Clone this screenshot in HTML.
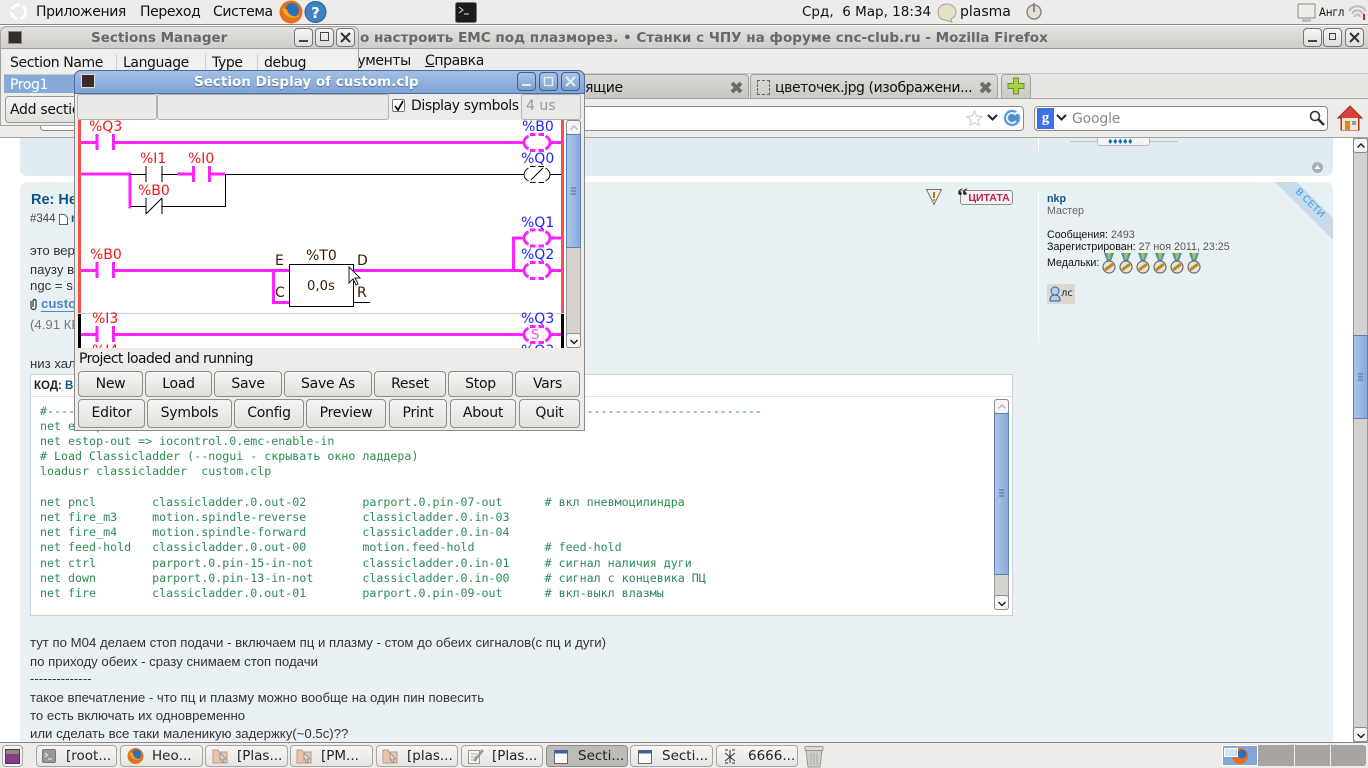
<!DOCTYPE html>
<html lang="ru"><head><meta charset="utf-8"><title>Screen</title>
<style>
html,body{margin:0;padding:0;width:1368px;height:768px;overflow:hidden;background:#fff}
body{position:relative;font-family:"DejaVu Sans","Noto Sans CJK SC",sans-serif;font-size:13px;color:#111}
.a{position:absolute;white-space:nowrap;box-sizing:border-box}
.t{position:absolute;white-space:nowrap;line-height:16px}
.f{font-family:"Liberation Sans","DejaVu Sans",sans-serif;font-size:13.2px;color:#333}
.s{font-size:10.7px}
.code{position:absolute;left:40px;font:11.65px/15px "DejaVu Sans Mono",monospace;color:#2e8b57;white-space:pre}
.btn{position:absolute;box-sizing:border-box;background:linear-gradient(#f6f5f4,#e2e0dd);border:1px solid #8f8d8a;border-radius:4px;text-align:center;font-size:14px;letter-spacing:-.25px;color:#111;height:26px;line-height:24px;white-space:nowrap}
.r2{top:399px;height:29px;line-height:26px}
.wb{position:absolute;box-sizing:border-box;width:19px;height:19px;border-radius:4px;border:1px solid #77767a;background:linear-gradient(#f7f7f6,#dedddb)}
.wbb{border-color:#3f5f8f;background:linear-gradient(#a8c3e6,#7d9fd0)}
.task{position:absolute;top:745px;height:22px;box-sizing:border-box;background:linear-gradient(#f7f6f5,#e6e4e2);border:1px solid #a8a6a3;border-radius:4px;font-size:13.5px;line-height:20px;white-space:nowrap;color:#222}
.sb{position:absolute;box-sizing:border-box;background:linear-gradient(90deg,#a9c5ea,#88aad9);border:1px solid #5f7fb0}
.arrow{position:absolute;box-sizing:border-box;background:#f6f6f5;border:1px solid #8d8d8d;border-radius:3px;width:15px;height:15px}
svg{position:absolute;overflow:visible}
</style></head><body>

<!-- Top panel -->
<div class="a" style="left:0;top:0;width:1368px;height:25px;background:#edecea;border-bottom:1px solid #8a8886"></div>
<svg style="left:8px;top:2px" width="20" height="20"><circle cx="10.500" cy="10" r="7" fill="none" stroke="#fff" stroke-width="2.600" stroke-dasharray="9 3.500"/></svg>
<div class="t" style="left:36px;top:4px;font-size:14px;letter-spacing:-.4px">Приложения</div>
<div class="t" style="left:140px;top:4px;font-size:14px;letter-spacing:-.4px">Переход</div>
<div class="t" style="left:213px;top:4px;font-size:14px;letter-spacing:-.4px">Система</div>
<svg style="left:279px;top:0" width="24" height="24"><circle cx="12" cy="12" r="11.500" fill="#e8701a"/><circle cx="13" cy="10" r="7" fill="#2f6fb5"/><path d="M3 8C5 18 15 21 21 15 16 18 9 16 8 9z" fill="#f6a51c"/></svg>
<svg style="left:304px;top:0" width="23" height="23"><circle cx="11.500" cy="12" r="10.500" fill="#3f83c4" stroke="#255d96"/><text x="11.500" y="18" text-anchor="middle" font-size="15" font-weight="bold" fill="#fff" font-family="DejaVu Sans">?</text></svg>
<svg style="left:455px;top:2px" width="22" height="21"><rect x=".5" y=".5" width="21" height="20" rx="2" fill="#1b1b1b" stroke="#777"/><path d="M4 5l4 3-4 3M9 12h5" stroke="#ddd" fill="none"/></svg>
<div class="t" style="left:802px;top:4px;font-size:13.500px">Срд,&nbsp; 6 Мар, 18:34</div>
<svg style="left:937px;top:3px" width="20" height="20"><path d="M10 1C4 1 1 5 1 9.500S4 17 8 17L15 19 14 16C17 14.500 19 12.500 19 9.500 19 5 15 1 10 1z" fill="#e5dfc6" stroke="#a9a38c"/></svg>
<div class="t" style="left:960px;top:4px;font-size:14px">plasma</div>
<svg style="left:1025px;top:1px" width="18" height="20"><circle cx="9" cy="11" r="7" fill="#e2e0d4" stroke="#8d8b80" stroke-width="1.500"/><path d="M9 2v9" stroke="#8d8b80" stroke-width="2"/></svg>
<svg style="left:1297px;top:3px" width="20" height="20"><rect x="1" y="1" width="17" height="14" rx="1" fill="#eeece6" stroke="#8a8a82"/><rect x="5" y="16" width="9" height="3" fill="#bbb"/></svg>
<div class="t" style="left:1319px;top:4px;font-size:11.500px;transform:scaleX(.88);transform-origin:left">Англ</div>
<svg style="left:1347px;top:3px" width="21" height="20"><path d="M2 8a10 10 0 0 1 17 0M5 11a6 6 0 0 1 11 0M8 14a2.500 2.500 0 0 1 5 0" stroke="#bbb" fill="none" stroke-width="2"/><path d="M17 11v6" stroke="#d22" stroke-width="2"/></svg>

<!-- Firefox window -->
<div class="a" style="left:0;top:26px;width:1368px;height:23px;background:linear-gradient(#e3e2df,#cfcecb);border-bottom:1px solid #999"></div>
<div class="t" style="left:360px;top:30px;font-weight:bold;font-size:13.550px;color:#67686b">о настроить EMC под плазморез. • Станки с ЧПУ на форуме cnc-club.ru - Mozilla Firefox</div>
<div class="wb" style="left:1303px;top:28px"><svg style="left:4px;top:11px" width="9" height="3"><rect width="9" height="2" fill="#444"/></svg></div>
<div class="wb" style="left:1323px;top:28px"><svg style="left:5px;top:4px" width="8" height="8"><rect x=".5" y=".5" width="6" height="6" fill="none" stroke="#444"/></svg></div>
<div class="wb" style="left:1345px;top:28px"><svg style="left:3px;top:3px" width="11" height="11"><path d="M1 1l9 9M10 1l-9 9" stroke="#333" stroke-width="2"/></svg></div>
<div class="a" style="left:0;top:49px;width:1368px;height:25px;background:#edecea;border-bottom:1px solid #c8c6c3"></div>
<div class="t" style="left:315px;top:53px;font-size:14px;letter-spacing:-.4px">Инструменты</div>
<div class="t" style="left:425px;top:53px;font-size:14px;letter-spacing:-.4px"><u>С</u>правка</div>
<div class="a" style="left:0;top:74px;width:1368px;height:25px;background:#e7e6e3;border-bottom:1px solid #aaa"></div>
<div class="a" style="left:440px;top:74px;width:309px;height:25px;background:linear-gradient(#d9d8d5,#c8c7c4);border:1px solid #a5a3a0;border-radius:4px 4px 0 0"></div>
<div class="t" style="left:585px;top:80px;font-size:14px;letter-spacing:-.4px">ящие</div>
<svg style="left:730px;top:81px" width="13" height="13"><path d="M2 2l9 9M11 2l-9 9" stroke="#6b6b68" stroke-width="4"/></svg>
<div class="a" style="left:750px;top:74px;width:248px;height:25px;background:linear-gradient(#dcdbd8,#cbcac7);border:1px solid #a5a3a0;border-radius:4px 4px 0 0"></div>
<div class="a" style="left:757px;top:80px;width:13px;height:15px;border:1px dashed #666"></div>
<div class="t" style="left:775px;top:80px;font-size:14px;letter-spacing:-.42px">цветочек.jpg (изображени...</div>
<svg style="left:979px;top:81px" width="13" height="13"><path d="M2 2l9 9M11 2l-9 9" stroke="#6b6b68" stroke-width="4"/></svg>
<div class="a" style="left:1001px;top:74px;width:30px;height:25px;background:linear-gradient(#dcdbd8,#cbcac7);border:1px solid #a5a3a0;border-radius:4px 4px 0 0"></div>
<svg style="left:1007px;top:77px" width="18" height="18"><path d="M6.500 1h5v5.500H17v5h-5.500V17h-5v-5.500H1v-5h5.500z" fill="#a9cf4a" stroke="#6f9420"/></svg>

<div class="a" style="left:0;top:99px;width:1368px;height:39px;background:#edecea;border-bottom:1px solid #a5a3a0"></div>
<div class="a" style="left:40px;top:106px;width:984px;height:25px;background:#fff;border:1px solid #8b8a88;border-radius:4px"></div>
<svg style="left:966px;top:110px" width="17" height="17"><path d="M8.500 1l2.300 5 5.200.6-3.900 3.500 1.100 5.300-4.700-2.700-4.700 2.700 1.100-5.300L1 6.600 6.200 6z" fill="#fff" stroke="#c9c9c9"/></svg>
<svg style="left:987px;top:114px" width="11" height="8"><path d="M1 1l4.500 4.500L10 1" fill="none" stroke="#222" stroke-width="2"/></svg>
<svg style="left:1003px;top:108px" width="18" height="20"><circle cx="9" cy="10" r="8" fill="#4a90d0" stroke="#9fc3e6"/><path d="M13 7a5 5 0 1 0 0 6" fill="none" stroke="#dcecf8" stroke-width="2"/><path d="M10 6h6V2z" fill="#e7f2fa"/></svg>
<div class="a" style="left:1034px;top:106px;width:294px;height:25px;background:#fff;border:1px solid #8b8a88;border-radius:4px"></div>
<div class="a" style="left:1037px;top:108px;width:17px;height:21px;background:#3d70e0;color:#fff;font:bold 15px/20px 'Liberation Serif',serif;text-align:center">g</div>
<svg style="left:1056px;top:114px" width="11" height="8"><path d="M1 1l4.500 4.500L10 1" fill="none" stroke="#222" stroke-width="2"/></svg>
<div class="t" style="left:1072px;top:111px;font-size:14px;letter-spacing:-.2px;color:#8b8b8b">Google</div>
<svg style="left:1308px;top:109px" width="18" height="18"><circle cx="7" cy="7" r="4.500" fill="none" stroke="#333" stroke-width="1.600"/><path d="M10.500 10.500L16 16" stroke="#333" stroke-width="2.500"/></svg>
<svg style="left:1337px;top:105px" width="26" height="26"><path d="M13 1L1 13h3v12h18V13h3z" fill="#d8423a" stroke="#a62a25"/><rect x="5" y="13" width="16" height="12" fill="#f0e6c8"/><rect x="8" y="16" width="5" height="9" fill="#d9892a"/><rect x="15" y="16" width="4" height="4" fill="#7ba5c8"/></svg>

<!-- Page content -->
<div class="a" style="left:20px;top:138px;width:1313px;height:38px;background:#e1ebf2;border-radius:0 0 7px 7px"></div>
<div class="a" style="left:1038px;top:138px;width:1px;height:14px;background:#fff"></div>
<div class="a" style="left:1070px;top:141px;width:108px;height:1px;background:#b9c0c6"></div>
<div class="a" style="left:1097px;top:138px;width:53px;height:8px;background:#f2f4f6;border:1px solid #b5bcc2;border-top:0;border-radius:0 0 3px 3px"></div>
<div class="a" style="left:1108px;top:138px;width:32px;height:7px;font:bold 9px/7px 'Liberation Sans',sans-serif;color:#1171b0;letter-spacing:.4px">♦♦♦♦♦</div>
<svg style="left:1312px;top:162px" width="11" height="11"><circle cx="5.500" cy="5.500" r="5.500" fill="#a9aeb2"/><path d="M2.500 7l3-4 3 4z" fill="#fff"/></svg>

<div class="a" style="left:20px;top:182px;width:1313px;height:561px;background:#eaf1f5;border-radius:7px 7px 0 0"></div>
<div class="a" style="left:1038px;top:192px;width:1px;height:150px;background:#fff"></div>
<svg style="left:1275px;top:182px" width="58" height="58"><path d="M0 0H22L58 36V58z" fill="#c8dbeb"/><text transform="translate(33 23) rotate(45)" text-anchor="middle" font-family="Liberation Sans" font-size="10" fill="#2aa5ea">В СЕТИ</text></svg>

<div class="t" style="left:31px;top:192px;font:bold 14.500px/16px 'Liberation Sans',sans-serif;color:#105289">Re: Не</div>
<div class="t" style="left:30px;top:211px;font:11.500px/16px 'Liberation Sans',sans-serif;color:#444">#344</div>
<svg style="left:59px;top:214px" width="9" height="11"><path d="M.5.5h5l3 3v7h-8z" fill="#fff" stroke="#666"/></svg>
<div class="t" style="left:71px;top:211px;font:bold 11.500px/16px 'Liberation Sans',sans-serif;color:#105289">r</div>
<div class="t f" style="left:30px;top:243px">это вер</div>
<div class="t f" style="left:30px;top:262px">паузу в</div>
<div class="t f" style="left:30px;top:278px">ngc = s</div>
<svg style="left:29px;top:298px" width="9" height="12"><path d="M2 3v6a2.500 2.500 0 0 0 5 0V3a1.500 1.500 0 0 0-3 0v6" fill="none" stroke="#333" stroke-width="1.200"/></svg>
<div class="t f" style="left:41px;top:296px;font-weight:bold;color:#4a86c8;border-bottom:1px solid #4a86c8;line-height:15px">custom</div>
<div class="t f" style="left:30px;top:317px;color:#777">(4.91 КБ</div>
<div class="t f" style="left:30px;top:356px">низ хал</div>

<!-- code box -->
<div class="a" style="left:30px;top:374px;width:983px;height:242px;background:#fff;border:1px solid #c9d2dc"></div>
<div class="a" style="left:31px;top:396px;width:981px;height:1px;background:#e0e4e8"></div>
<div class="t" style="left:34px;top:378px;font:bold 11.500px/16px 'Liberation Sans',sans-serif;color:#222">КОД: <span style="color:#105289">В</span></div>
<div class="code" style="top:404px">#------------------------------------------------------------------------------------------------------</div>
<div class="code" style="top:419px">net estop-in</div>
<div class="code" style="top:434px">net estop-out =&gt; iocontrol.0.emc-enable-in</div>
<div class="code" style="top:449px"># Load Classicladder (--nogui - скрывать окно ладдера)</div>
<div class="code" style="top:464px">loadusr classicladder  custom.clp</div>
<div class="code" style="top:495px">net pncl        classicladder.0.out-02        parport.0.pin-07-out      # вкл пневмоцилиндра</div>
<div class="code" style="top:510px">net fire_m3     motion.spindle-reverse        classicladder.0.in-03</div>
<div class="code" style="top:525px">net fire_m4     motion.spindle-forward        classicladder.0.in-04</div>
<div class="code" style="top:540px">net feed-hold   classicladder.0.out-00        motion.feed-hold          # feed-hold</div>
<div class="code" style="top:556px">net ctrl        parport.0.pin-15-in-not       classicladder.0.in-01     # сигнал наличия дуги</div>
<div class="code" style="top:571px">net down        parport.0.pin-13-in-not       classicladder.0.in-00     # сигнал с концевика ПЦ</div>
<div class="code" style="top:586px">net fire        classicladder.0.out-01        parport.0.pin-09-out      # вкл-выкл влазмы</div>
<div class="a" style="left:994px;top:400px;width:15px;height:210px;background:#d3d2cf;border:1px solid #999;border-radius:3px"></div>
<div class="arrow" style="left:994px;top:399px"><svg style="left:3px;top:4px" width="8" height="6"><path d="M.5 4.500L4 1l3.500 3.500" fill="none" stroke="#bbb" stroke-width="1.500"/></svg></div>
<div class="sb" style="left:994px;top:413px;width:15px;height:162px"></div>
<svg style="left:998px;top:489px" width="7" height="8"><path d="M1 1h5M1 4h5M1 7h5" stroke="#4b6a9c"/></svg>
<div class="arrow" style="left:994px;top:595px"><svg style="left:3px;top:5px" width="8" height="6"><path d="M.5 1L4 4.500 7.500 1" fill="none" stroke="#222" stroke-width="1.500"/></svg></div>

<div class="t f" style="left:30px;top:635px">тут по М04 делаем стоп подачи - включаем пц и плазму - стом до обеих сигналов(с пц и дуги)</div>
<div class="t f" style="left:30px;top:654px">по приходу обеих - сразу снимаем стоп подачи</div>
<div class="t f" style="left:30px;top:671px">--------------</div>
<div class="t f" style="left:30px;top:690px">такое впечатление - что пц и плазму можно вообще на один пин повесить</div>
<div class="t f" style="left:30px;top:708px">то есть включать их одновременно</div>
<div class="t f" style="left:30px;top:726px">или сделать все таки маленикую задержку(~0.5с)??</div>

<!-- right profile -->
<svg style="left:926px;top:189px" width="16" height="16"><path d="M.5.500h15L8 15.500z" fill="#f2f2ea" stroke="#77756e"/><path d="M8 3v6" stroke="#b97a16" stroke-width="2"/><circle cx="8" cy="11" r="1" fill="#b97a16"/></svg>
<div class="a" style="left:960px;top:190px;width:53px;height:15px;background:#f4f3f0;border:1px solid #8c8c8c;border-radius:3px;font:bold 10.500px/14px 'Liberation Sans',sans-serif;color:#c0204a;text-align:center;padding-left:5px">ЦИТАТА</div>
<div class="t" style="left:957px;top:186px;font:bold 22px/20px 'Liberation Serif',serif;color:#333">“</div>
<div class="t f s" style="left:1047px;top:191px;font-weight:bold;color:#105289">nkp</div>
<div class="t f s" style="left:1047px;top:203px;color:#666">Мастер</div>
<div class="t f s" style="left:1047px;top:227px;color:#111">Сообщения: <span style="color:#555">2493</span></div>
<div class="t f s" style="left:1047px;top:239px;color:#111">Зарегистрирован: <span style="color:#555">27 ноя 2011, 23:25</span></div>
<div class="t f s" style="left:1047px;top:255px;color:#111">Медальки:</div>
<svg style="left:1102px;top:253px" width="100" height="21">
<defs><g id="m"><path d="M2 0h10L9 8H5z" fill="#3a9cc0"/><path d="M5 0h4L8 6H6z" fill="#d9b21c"/><circle cx="7" cy="14" r="6" fill="#e4e4df" stroke="#6c6c6c" stroke-width="1.200"/><path d="M3 17l8-6" stroke="#c18a1f" stroke-width="3"/></g></defs>
<use href="#m" x="0"/><use href="#m" x="17"/><use href="#m" x="34"/><use href="#m" x="51"/><use href="#m" x="68"/><use href="#m" x="85"/></svg>
<div class="a" style="left:1047px;top:284px;width:28px;height:20px;background:#d8d8d5;border-radius:2px"></div>
<svg style="left:1049px;top:286px" width="12" height="16"><circle cx="6" cy="5" r="4" fill="#b5cdec" stroke="#40608f"/><path d="M1 15c0-5 2-6 5-6s5 1 5 6z" fill="#b5cdec" stroke="#40608f"/></svg>
<div class="t" style="left:1061px;top:286px;font:10px/16px 'DejaVu Sans',sans-serif;color:#222">лс</div>

<!-- page scrollbar -->
<div class="a" style="left:1353px;top:138px;width:15px;height:604px;background:#d3d2cf;border-left:1px solid #999;border-right:1px solid #999"></div>
<div class="arrow" style="left:1353px;top:138px"><svg style="left:3px;top:4px" width="8" height="6"><path d="M.5 4.500L4 1l3.500 3.500" fill="none" stroke="#222" stroke-width="1.500"/></svg></div>
<div class="sb" style="left:1353px;top:335px;width:15px;height:84px"></div>
<svg style="left:1357px;top:373px" width="7" height="8"><path d="M1 1h5M1 4h5M1 7h5" stroke="#4b6a9c"/></svg>
<div class="arrow" style="left:1353px;top:727px"><svg style="left:3px;top:5px" width="8" height="6"><path d="M.5 1L4 4.500 7.500 1" fill="none" stroke="#222" stroke-width="1.500"/></svg></div>

<!-- Sections Manager -->
<div class="a" style="left:0;top:26px;width:359px;height:100px;background:#edecea;border:1px solid #a5a3a0;border-radius:7px 7px 0 0"></div>
<div class="a" style="left:1px;top:27px;width:357px;height:22px;background:linear-gradient(#e3e2df,#cfcecb);border-bottom:1px solid #a5a3a0;border-radius:6px 6px 0 0"></div>
<div class="a" style="left:8px;top:31px;width:14px;height:13px;background:#3a2a2a;border:1px solid #888"></div>
<div class="t" style="left:91px;top:30px;font-weight:bold;font-size:13.500px;color:#67686b">Sections Manager</div>
<div class="wb" style="left:294px;top:28px"><svg style="left:4px;top:11px" width="9" height="3"><rect width="9" height="2" fill="#444"/></svg></div>
<div class="wb" style="left:315px;top:28px"><svg style="left:4px;top:3px" width="9" height="9"><rect x=".5" y=".5" width="8" height="8" fill="none" stroke="#444"/></svg></div>
<div class="wb" style="left:336px;top:28px"><svg style="left:3px;top:3px" width="11" height="11"><path d="M1 1l9 9M10 1l-9 9" stroke="#333" stroke-width="2"/></svg></div>
<div class="a" style="left:4px;top:50px;width:352px;height:25px;background:#f1f0ee;border-bottom:1px solid #c8c6c3"></div>
<div class="t" style="left:10px;top:55px;font-size:14px;letter-spacing:-.4px">Section Name</div>
<div class="t" style="left:123px;top:55px;font-size:14px;letter-spacing:-.4px">Language</div>
<div class="t" style="left:212px;top:55px;font-size:14px;letter-spacing:-.4px">Type</div>
<div class="t" style="left:264px;top:55px;font-size:14px;letter-spacing:-.4px">debug</div>
<div class="a" style="left:116px;top:54px;width:1px;height:18px;background:#ccc"></div>
<div class="a" style="left:205px;top:54px;width:1px;height:18px;background:#ccc"></div>
<div class="a" style="left:257px;top:54px;width:1px;height:18px;background:#ccc"></div>
<div class="a" style="left:4px;top:75px;width:352px;height:18px;background:#86abd9"></div>
<div class="t" style="left:10px;top:77px;font-size:14px;letter-spacing:-.4px;color:#fff">Prog1</div>
<div class="a" style="left:5px;top:96px;width:90px;height:27px;background:linear-gradient(#f6f5f4,#e2e0dd);border:1px solid #999;border-radius:4px"></div>
<div class="t" style="left:10px;top:102px;font-size:14px;letter-spacing:-.3px">Add section</div>

<!-- Section Display -->
<div class="a" style="left:74px;top:70px;width:511px;height:361px;background:#edecea;border:1px solid #8c8a87;border-radius:7px 7px 0 0"></div>
<div class="a" style="left:74px;top:70px;width:511px;height:24px;background:linear-gradient(#a3bfe5,#7fa3d6);border:1px solid #4e6c9e;border-radius:7px 7px 0 0"></div>
<div class="a" style="left:81px;top:74px;width:14px;height:14px;background:#3a2a2a;border:1px solid #ddd"></div>
<div class="t" style="left:194px;top:74px;font-weight:bold;font-size:13.500px;color:#fff;text-shadow:0 1px 1px #4e6c9e">Section Display of custom.clp</div>
<div class="wb wbb" style="left:517px;top:72px"><svg style="left:4px;top:11px" width="9" height="3"><rect width="9" height="2" fill="#dfe9f6"/></svg></div>
<div class="wb wbb" style="left:539px;top:72px"><svg style="left:4px;top:4px" width="9" height="9"><rect x=".5" y=".5" width="8" height="8" fill="none" stroke="#e4ecf7" stroke-width="1.500"/></svg></div>
<div class="wb wbb" style="left:561px;top:72px"><svg style="left:3px;top:3px" width="11" height="11"><path d="M1 1l9 9M10 1l-9 9" stroke="#e8eff9" stroke-width="2"/></svg></div>
<div class="a" style="left:77px;top:94px;width:80px;height:26px;background:#e9e8e6;border:1px solid #b5b3b0;border-radius:3px"></div>
<div class="a" style="left:157px;top:94px;width:232px;height:26px;background:#e9e8e6;border:1px solid #b5b3b0;border-radius:3px"></div>
<div class="a" style="left:392px;top:99px;width:13px;height:13px;background:#fff;border:1px solid #777;border-radius:2px"></div>
<svg style="left:394px;top:101px" width="10" height="10"><path d="M1 5l3 4 5-9" fill="none" stroke="#111" stroke-width="1.800"/></svg>
<div class="t" style="left:411px;top:98px;font-size:14px;letter-spacing:-.42px">Display symbols</div>
<div class="a" style="left:521px;top:94px;width:60px;height:26px;background:#e9e8e6;border:1px solid #b5b3b0;border-radius:3px"></div>
<div class="t" style="left:526px;top:98px;font-size:14px;color:#999">4 us</div>

<!-- Ladder -->
<svg style="left:78px;top:120px" width="488" height="229" viewBox="78 120 488 229">
<defs>
<clipPath id="lc"><rect x="78" y="120" width="488" height="228"/></clipPath>
<g id="cb"><path d="M-8.500 -6.500Q-13 -4 -13 0T-8.500 6.500M8.500 -6.500Q13 -4 13 0T8.500 6.500M-7 -8H-1.500M1.500 -8H7M-7 8H-1.500M1.500 8H7" fill="none"/></g>
</defs>
<g clip-path="url(#lc)">
<rect x="78" y="120" width="488" height="228" fill="#fff"/>
<rect x="78" y="120" width="3" height="193" fill="#ef5350"/>
<rect x="561" y="120" width="3" height="193" fill="#ef5350"/>
<rect x="78" y="313" width="3" height="35" fill="#000"/>
<rect x="561" y="313" width="3" height="35" fill="#000"/>
<rect x="78" y="313" width="486" height="1" fill="#cfcfcf"/>
<g stroke="#ff22ff" stroke-width="3" fill="none">
<path d="M81 142.500H96M114 142.500H524M550 142.500H561"/>
<path d="M97 134V150M113.500 134V150" />
<use href="#cb" x="537" y="142.500"/>
<path d="M81 174H130V207H131"/>
<path d="M177 174H193M209 174H225"/>
<path d="M193.500 166V182M209.500 166V182" />
<path d="M81 270.500H96M114 270.500H289M354 270.500H524M550 270.500H561"/>
<path d="M97 262V278M113.500 262V278"/>
<use href="#cb" x="537" y="270.500"/>
<use href="#cb" x="537" y="238"/>
<path d="M273.500 270V302.500H289"/>
<path d="M513.500 270V238H524M550 238H561"/>
<path d="M81 334.500H96M114 334.500H524M550 334.500H561"/>
<path d="M97 326V342M113.500 326V342"/>
<use href="#cb" x="537" y="334.500"/>
</g>
<g stroke="#000" stroke-width="1" fill="none">
<path d="M130 174.500H146M161 174.500H177M225 174.500H524M550 174.500H561"/>
<path d="M146 166V182M162 166V182"/>
<path d="M131 206.500H146M161 206.500H225.500V174"/>
<path d="M146 198V214M162 198V214M146 214L162 198"/>
<use href="#cb" x="537" y="174.500"/>
<path d="M531 180L543 168"/>
<rect x="289.500" y="264.500" width="64" height="42" fill="#fff"/>
<path d="M354 302.500H370"/>
</g>
<rect x="354" y="269" width="12" height="3" fill="#ff22ff"/>
<g font-family="DejaVu Sans" font-size="14">
<g fill="#f01818">
<text x="89" y="131">%Q3</text><text x="140" y="163">%I1</text><text x="188" y="163">%I0</text><text x="138" y="195">%B0</text><text x="90" y="259">%B0</text><text x="92" y="323">%I3</text><text x="92" y="355">%I4</text></g>
<g fill="#2222ff">
<text x="522" y="131">%B0</text><text x="521" y="163">%Q0</text><text x="521" y="227">%Q1</text><text x="521" y="259">%Q2</text><text x="521" y="323">%Q3</text><text x="521" y="355">%Q3</text></g>
<g fill="#3a1c00">
<text x="275" y="265">E</text><text x="275" y="297">C</text><text x="357" y="265">D</text><text x="357" y="297">R</text><text x="306" y="260">%T0</text><text x="307" y="290" font-size="13.200">0,0s</text></g>
<text x="531" y="339" fill="#ff44ff" font-size="13">S</text>
</g>
<path d="M349 267v16l4-4 3 6 2-1-3-6h5z" fill="#fff" stroke="#222"/>
</g>
</svg>
<div class="a" style="left:566px;top:120px;width:15px;height:228px;background:#d3d2cf;border:1px solid #999;border-radius:3px"></div>
<div class="arrow" style="left:566px;top:120px"><svg style="left:3px;top:4px" width="8" height="6"><path d="M.5 4.500L4 1l3.500 3.500" fill="none" stroke="#bbb" stroke-width="1.500"/></svg></div>
<div class="sb" style="left:566px;top:134px;width:15px;height:114px"></div>
<svg style="left:570px;top:187px" width="7" height="8"><path d="M1 1h5M1 4h5M1 7h5" stroke="#4b6a9c"/></svg>
<div class="arrow" style="left:566px;top:333px"><svg style="left:3px;top:5px" width="8" height="6"><path d="M.5 1L4 4.500 7.500 1" fill="none" stroke="#222" stroke-width="1.500"/></svg></div>
<div class="t" style="left:79px;top:351px;font-size:14px;letter-spacing:-.58px">Project loaded and running</div>

<div class="btn" style="left:78px;top:371px;width:65px">New</div>
<div class="btn" style="left:145px;top:371px;width:67px">Load</div>
<div class="btn" style="left:214px;top:371px;width:68px">Save</div>
<div class="btn" style="left:284px;top:371px;width:88px">Save As</div>
<div class="btn" style="left:374px;top:371px;width:72px">Reset</div>
<div class="btn" style="left:448px;top:371px;width:65px">Stop</div>
<div class="btn" style="left:515px;top:371px;width:65px">Vars</div>
<div class="btn r2" style="left:78px;width:67px">Editor</div>
<div class="btn r2" style="left:147px;width:85px">Symbols</div>
<div class="btn r2" style="left:234px;width:70px">Config</div>
<div class="btn r2" style="left:306px;width:80px">Preview</div>
<div class="btn r2" style="left:389px;width:58px">Print</div>
<div class="btn r2" style="left:450px;width:66px">About</div>
<div class="btn r2" style="left:519px;width:61px">Quit</div>

<!-- Taskbar -->
<div class="a" style="left:0;top:742px;width:1368px;height:26px;background:#edecea;border-top:1px solid #8a8886"></div>
<div class="a" style="left:2px;top:745px;width:21px;height:22px;background:#f6f5f4;border:1px solid #a8a6a3;border-radius:4px"></div>
<div class="a" style="left:5px;top:749px;width:15px;height:15px;background:linear-gradient(#8f8a68 0 30%,#8a3a8e 30%);border:1px solid #5a2c5c"></div>
<div class="task" style="left:36px;width:81px;padding-left:29px">[root...</div>
<svg style="left:42px;top:749px" width="14" height="14"><rect x=".5" y=".5" width="13" height="13" rx="1.500" fill="#999" stroke="#777"/><path d="M3 4l2.500 2L3 8M6 10h4" stroke="#eee" fill="none"/></svg>
<div class="task" style="left:120px;width:83px;padding-left:31px">Нео...</div>
<svg style="left:127px;top:747px" width="17" height="18"><circle cx="8.500" cy="9" r="8" fill="#e8701a"/><circle cx="9.500" cy="7.500" r="5" fill="#2f6fb5"/><path d="M2 6c2 7 9 9 13 5-4 2-8 1-9-5z" fill="#f6a51c"/></svg>
<div class="task" style="left:205px;width:83px;padding-left:31px">[Plas...</div>
<svg style="left:212px;top:749px" width="16" height="15"><path d="M1 1h5l1 2h8v11H1z" fill="#ecc4ae" stroke="#b89c8c"/><path d="M8 4l6 6-3 0 1 3-2 0-1-3-1 1z" fill="#ddd" stroke="#999"/></svg>
<div class="task" style="left:290px;width:83px;padding-left:30px">[PM...</div>
<svg style="left:296px;top:749px" width="16" height="15"><path d="M1 1h5l1 2h8v11H1z" fill="#ecc4ae" stroke="#b89c8c"/><path d="M8 4l6 6-3 0 1 3-2 0-1-3-1 1z" fill="#ddd" stroke="#999"/></svg>
<div class="task" style="left:376px;width:82px;padding-left:30px">[plas...</div>
<svg style="left:382px;top:749px" width="16" height="15"><path d="M1 1h5l1 2h8v11H1z" fill="#ecc4ae" stroke="#b89c8c"/><path d="M8 4l6 6-3 0 1 3-2 0-1-3-1 1z" fill="#ddd" stroke="#999"/></svg>
<div class="task" style="left:461px;width:82px;padding-left:30px">[Plas...</div>
<svg style="left:468px;top:748px" width="16" height="16"><rect x=".5" y="2.500" width="11" height="13" fill="#f5f5f0" stroke="#999"/><path d="M3 6h6M3 9h6M3 12h6" stroke="#aaa"/><path d="M6 12L14 2l1 1-8 10z" fill="#d9c779" stroke="#888"/></svg>
<div class="task" style="left:546px;width:82px;padding-left:31px;background:#bdbbb8;border-color:#8f8d8a">Secti...</div>
<svg style="left:554px;top:750px" width="14" height="14"><rect x=".5" y=".5" width="13" height="13" fill="#fbfbfb" stroke="#667"/><rect x=".5" y=".5" width="13" height="3" fill="#3465a4"/></svg>
<div class="task" style="left:630px;width:83px;padding-left:31px">Secti...</div>
<svg style="left:638px;top:750px" width="14" height="14"><rect x=".5" y=".5" width="13" height="13" fill="#fbfbfb" stroke="#667"/><rect x=".5" y=".5" width="13" height="3" fill="#3465a4"/></svg>
<div class="task" style="left:716px;width:82px;padding-left:31px">6666...</div>
<svg style="left:723px;top:749px" width="14" height="15"><path d="M2 1h3M9 1h3M7 1v13M2 14h3M9 14h3M2 4l10 8M12 4L2 12" stroke="#333" fill="none"/></svg>
<svg style="left:803px;top:745px" width="22" height="23"><path d="M3 5h16l-2 17H5z" fill="#cfcfca" stroke="#999"/><rect x="2" y="1.500" width="18" height="4" rx="1" fill="#dcdcd8" stroke="#999"/><path d="M8 8v12M11 8v12M14 8v12" stroke="#aaa"/></svg>

<div class="a" style="left:1222px;top:745px;width:144px;height:21px;background:#a8a49f;border-radius:3px"></div>
<div class="a" style="left:1222px;top:745px;width:36px;height:21px;background:#80a7d8;border:1px solid #fff"></div>
<svg style="left:1232px;top:747px" width="16" height="17"><circle cx="8" cy="9" r="8" fill="#e8701a"/><circle cx="10" cy="7" r="4.500" fill="#2f6fb5"/></svg>
<div class="a" style="left:1224px;top:748px;width:14px;height:9px;background:#d3e3f5;border:1px solid #fff"></div>
<div class="a" style="left:1294px;top:745px;width:1px;height:21px;background:#f0f0ee"></div>
<div class="a" style="left:1330px;top:745px;width:1px;height:21px;background:#f0f0ee"></div>
</body></html>
